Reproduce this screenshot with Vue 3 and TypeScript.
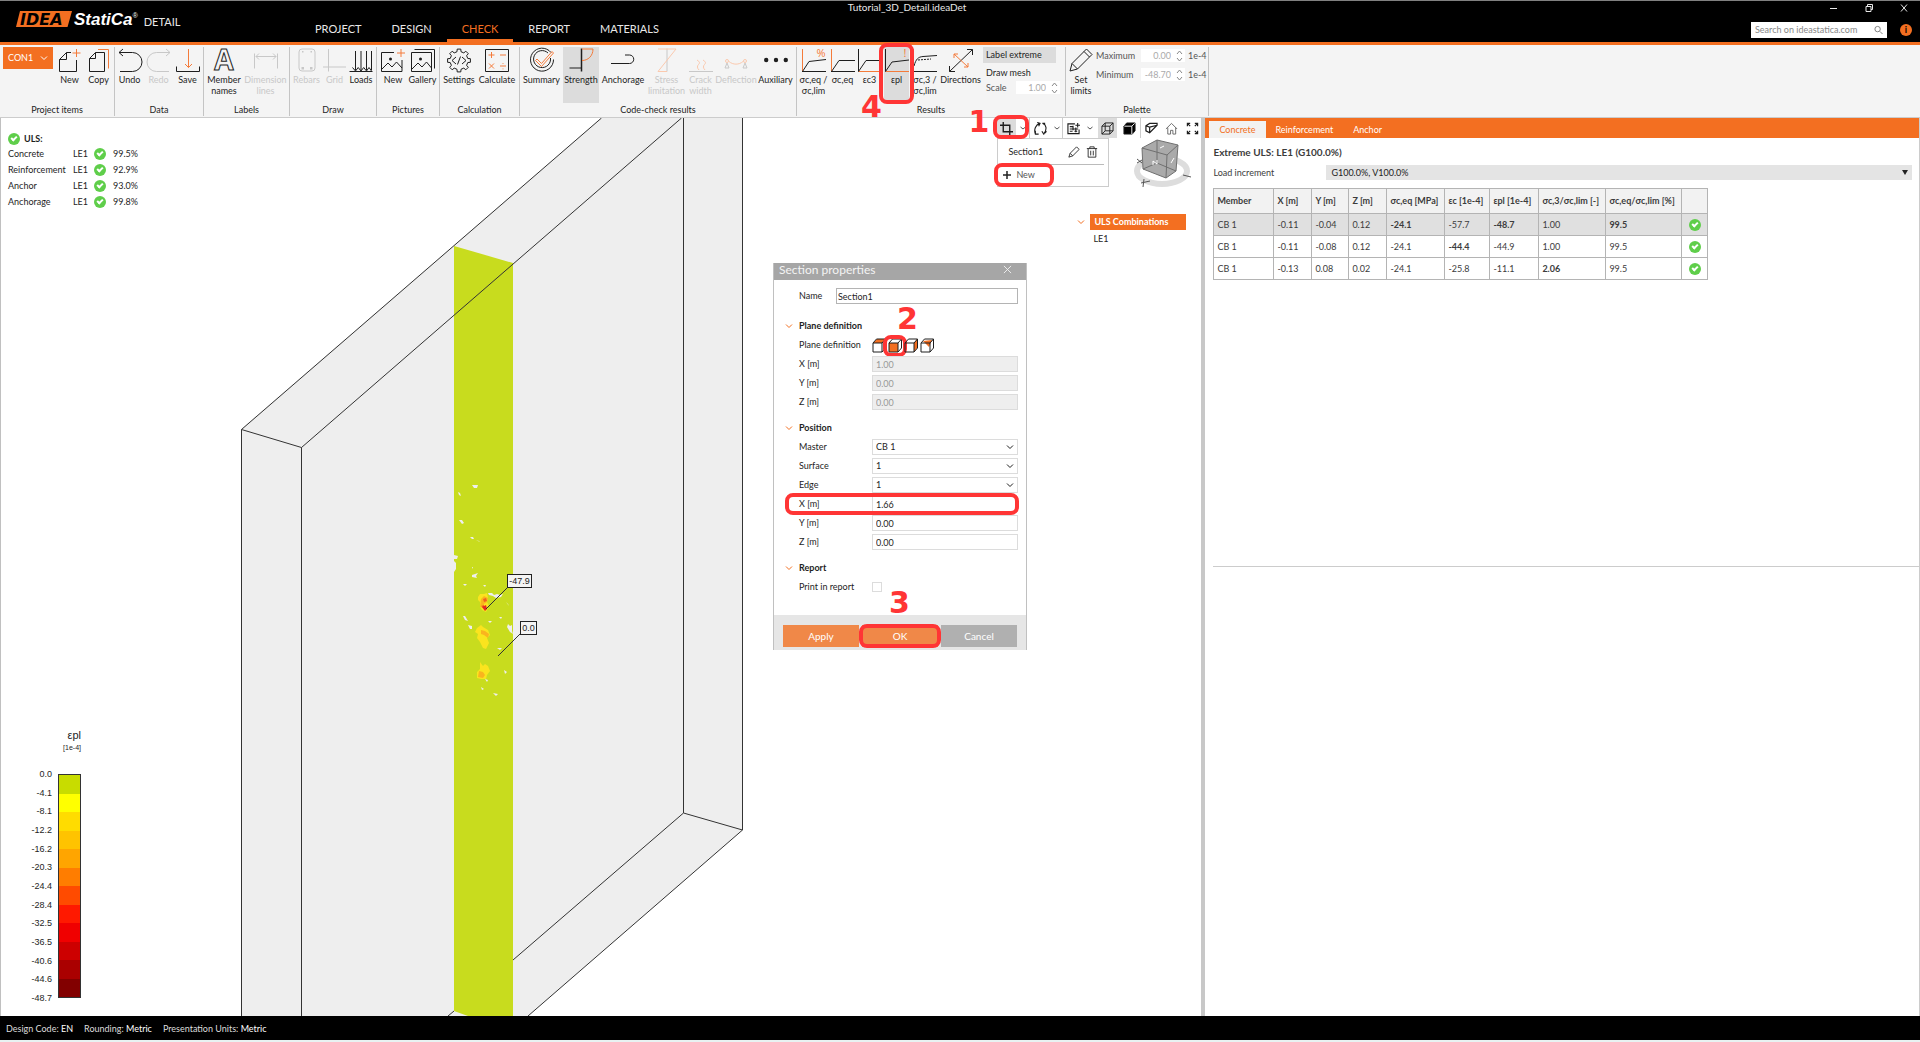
<script setup lang="ts">
import { ref } from 'vue'

interface Stroke {
  d?: string
  c?: string
  f?: boolean
  w?: number
  dash?: string
  text?: string
  x?: number
  y?: number
  size?: number
}
interface Tool {
  icon: string
  lines: string[]
  w: number
  off?: boolean
  on?: boolean
}
interface Group {
  name: string
  w: number
  tools: Tool[]
}

const gear = (() => {
  const pts: string[] = []
  for (let i = 0; i < 8; i++) {
    const at = (r: number, deg: number) => {
      const a = ((i * 45 + deg) * Math.PI) / 180
      return `${(12 + r * Math.cos(a)).toFixed(1)} ${(12.5 + r * Math.sin(a)).toFixed(1)}`
    }
    pts.push(at(9, -13), at(11.5, -9), at(11.5, 9), at(9, 13))
  }
  return `M${pts.join('L')}Z`
})()

const icons: Record<string, Stroke[]> = {
  newDoc: [{ d: 'M13 4.5H8.5L1.5 11.5V23.5H18.5V12M8.5 4.5V11.5H1.5' }, { d: 'M18.5 1v8M14.5 5h8', c: 'o' }],
  copy: [{ d: 'M8.5 4.5H17.5V23.5H2.5V10.5L8.5 4.5V10.5H2.5' }, { d: 'M11 1.5H21.5V20.5', c: 'o' }],
  undo: [{ d: 'M1 4.5H14.5a9.5 9.5 0 0 1 0 19H2M5 1L1 4.5L5 8' }],
  redo: [{ d: 'M23 4.5H9.5a9.5 9.5 0 0 0 0 19H22M19 1l4 3.5-4 3.5' }],
  save: [{ d: 'M12.5 1V19.5M9 16l3.5 3.5L16 16', c: 'o' }, { d: 'M.5 18.5v5H23.5V18.5' }],
  names: [{ text: 'A', x: 12, y: 22, size: 28 }],
  dims: [{ d: 'M.5 5.5v15M23.5 5.5v15M2 8.5h20M5 5.500L2 8.5l3 3M19 5.500l3 3-3 3' }],
  rebars: [
    { d: 'M7 1h10a3 3 0 0 1 3 3v16a3 3 0 0 1-3 3H7a3 3 0 0 1-3-3V4a3 3 0 0 1 3-3z' },
    { d: 'M7 3h1.500v1.500H7zM15.500 3h1.500v1.500h-1.500zM6.500 19h2.500v2.500H6.500zM15 19h2.500v2.500H15z', f: true },
  ],
  grid: [{ d: 'M5.500 1v22.500M0 19h23' }],
  loads: [{ d: 'M6.500 3v19M12 3v19M17.500 3v19M22.500 3v19M.5 23.5H23.5M3.500 19.500l3 3.500 2.700-3.500 2.800 3.500 2.700-3.500 2.800 3.500 2.500-3.500 2.500 3.500' }],
  picNew: [
    { d: 'M13 4.5H.5v19H21V12M1 21l6-6 4 4 4.500-5 5.500 6' },
    { d: 'M8 11a1.500 1.500 0 1 0 3 0a1.500 1.500 0 1 0-3 0', f: true },
    { d: 'M20 1v8M16 5h8', c: 'o' },
  ],
  gallery: [
    { d: 'M.5 4.5h20v19H.5zM1 21l6-6 4 4 4.500-5 5 6M3.500 1.500h20v19' },
    { d: 'M8 11a1.500 1.500 0 1 0 3 0a1.500 1.500 0 1 0-3 0', f: true },
  ],
  gear: [{ d: gear }, { d: 'M9 9l-4 3.500L9 16M15 9l4 3.500-4 3.500M13.500 8.500l-3 8' }],
  calc: [{ d: 'M.5 1.500h23v22H.5z' }, { d: 'M3.500 7h6M6.500 4v6M15 7h6M4 15.500l5 5M9 15.500l-5 5M15 18h6M18 15v.8M18 20.500v.8', c: 'o' }],
  summary: [
    { d: 'M21 4.500a11.500 11.500 0 1 0 2.500 7M18 5a8.500 8.500 0 1 0 2.500 5' },
    { d: 'M7 11l4.500 4.500L22 3.500l1.500 1.500L11.500 18.500 5.500 12.500z', c: 'o' },
  ],
  strength: [{ d: 'M12.500.5v23', w: 1.500 }, { d: 'M.5 20h12' }, { d: 'M13 1H24c0 7-5 11.500-11 11.500', c: 'o' }],
  anchorage: [{ d: 'M0 15.500H18.500a4 4 0 0 0 0-8.500H14' }],
  stress: [{ d: 'M12 .5v23' }, { d: 'M3 1H21L3 23.500H12', c: 'o' }],
  crack: [{ d: 'M0 23.500H24' }, { d: 'M8 12c3 2 3 3 1.500 4.500S8 20 10 22M14 12c3 2 3 3 1.500 4.500S14 20 16 22', c: 'o' }],
  deflect: [
    { d: 'M1 20l2-5 2 5zM19 20l2-5 2 5z' },
    { d: 'M5 13.500c4 3.500 10 3.500 14 0M1.500 13a1.500 1.500 0 1 0 3 0a1.500 1.500 0 1 0-3 0M19.500 13a1.500 1.500 0 1 0 3 0a1.500 1.500 0 1 0-3 0', c: 'o' },
  ],
  dots: [{ d: 'M0 12a2.200 2.200 0 1 0 4.400 0a2.200 2.200 0 1 0-4.400 0M9.800 12a2.200 2.200 0 1 0 4.400 0a2.200 2.200 0 1 0-4.400 0M19.600 12a2.200 2.200 0 1 0 4.400 0a2.200 2.200 0 1 0-4.400 0', f: true }],
  curvePct: [{ d: 'M.5 1v22', c: 'o' }, { d: 'M0 23.500H24M.5 23.500L7 13.500L24 11.500' }, { text: '%', x: 19, y: 9, size: 11, c: 'o' }],
  curveFlat: [{ d: 'M.5 1v22', c: 'o' }, { d: 'M0 23.500H24M.5 23.500L8 12.500H24' }],
  curveC3: [{ d: 'M.5 23.500H24', c: 'o' }, { d: 'M.5 1v22.500L8 12.500H24' }],
  curvePl: [{ d: 'M.5 23.500H24', c: 'o' }, { d: 'M.5 1v22.500L7 14L24 12' }, { text: '!', x: 20, y: 9, size: 11, c: 'o' }],
  curve3: [{ d: 'M.5 1v22', c: 'o' }, { d: 'M0 23.500H24M1 18C3 11 5 9 10 8.500L24 7.500' }, { d: 'M5 12L18 11', dash: '2 1' }],
  directions: [{ d: 'M.5 23.500L23.500 1.500M18 1.500h5.500v5.500M.5 18v5.500H6' }, { d: 'M5 6l14 13M5 10V6h4M15 19h4v-4', c: 'o' }],
  pencil: [{ d: 'M1 23l2-7.500L17.500 1l5.500 5.500L8.500 21zM3 15.500l5.500 5.500M15 3.500l5.500 5.500' }],
}

const groups: Group[] = [
  { name: 'Project items', w: 115, tools: [
    { icon: 'newDoc', lines: ['New'], w: 33 },
    { icon: 'copy', lines: ['Copy'], w: 25 } ] },
  { name: 'Data', w: 89, tools: [
    { icon: 'undo', lines: ['Undo'], w: 29 },
    { icon: 'redo', lines: ['Redo'], w: 29, off: true },
    { icon: 'save', lines: ['Save'], w: 29 } ] },
  { name: 'Labels', w: 86, tools: [
    { icon: 'names', lines: ['Member', 'names'], w: 40 },
    { icon: 'dims', lines: ['Dimension', 'lines'], w: 43, off: true } ] },
  { name: 'Draw', w: 87, tools: [
    { icon: 'rebars', lines: ['Rebars'], w: 33, off: true },
    { icon: 'grid', lines: ['Grid'], w: 23, off: true },
    { icon: 'loads', lines: ['Loads'], w: 30 } ] },
  { name: 'Pictures', w: 63, tools: [
    { icon: 'picNew', lines: ['New'], w: 32 },
    { icon: 'gallery', lines: ['Gallery'], w: 27 } ] },
  { name: 'Calculation', w: 80, tools: [
    { icon: 'gear', lines: ['Settings'], w: 38 },
    { icon: 'calc', lines: ['Calculate'], w: 38 } ] },
  { name: 'Code-check results', w: 277, tools: [
    { icon: 'summary', lines: ['Summary'], w: 43 },
    { icon: 'strength', lines: ['Strength'], w: 36, on: true },
    { icon: 'anchorage', lines: ['Anchorage'], w: 48 },
    { icon: 'stress', lines: ['Stress', 'limitation'], w: 39, off: true },
    { icon: 'crack', lines: ['Crack', 'width'], w: 29, off: true },
    { icon: 'deflect', lines: ['Deflection'], w: 42, off: true },
    { icon: 'dots', lines: ['Auxiliary'], w: 37 } ] },
  { name: 'Results', w: 269, tools: [
    { icon: 'curvePct', lines: ['σc,eq /', 'σc,lim'], w: 33 },
    { icon: 'curveFlat', lines: ['σc,eq'], w: 25 },
    { icon: 'curveC3', lines: ['εc3'], w: 29 },
    { icon: 'curvePl', lines: ['εpl'], w: 25, on: true },
    { icon: 'curve3', lines: ['σc,3 /', 'σc,lim'], w: 32 },
    { icon: 'directions', lines: ['Directions'], w: 39 } ] },
  { name: 'Palette', w: 143, tools: [{ icon: 'pencil', lines: ['Set', 'limits'], w: 30 }] },
]

const tabs = ['PROJECT', 'DESIGN', 'CHECK', 'REPORT', 'MATERIALS']
const activeTab = ref('CHECK')

const checks = [
  ['Concrete', '99.5%'],
  ['Reinforcement', '92.9%'],
  ['Anchor', '93.0%'],
  ['Anchorage', '99.8%'],
]

const scaleValues = ['0.0', '-4.1', '-8.1', '-12.2', '-16.2', '-20.3', '-24.4', '-28.4', '-32.5', '-36.5', '-40.6', '-44.6', '-48.7']
const scaleColors = ['#c8dc00', '#ffff00', '#ffdc00', '#ffc300', '#ffa500', '#ff7d00', '#ff4b00', '#ff1900', '#f00000', '#cd0000', '#aa0000', '#820000']

const columns = ['Member', 'X [m]', 'Y [m]', 'Z [m]', 'σc,eq [MPa]', 'εc [1e-4]', 'εpl [1e-4]', 'σc,3/σc,lim [-]', 'σc,eq/σc,lim [%]', '']
const rows = [
  { cells: ['CB 1', '-0.11', '-0.04', '0.12', '-24.1', '-57.7', '-48.7', '1.00', '99.5'], bold: [4, 6, 8] },
  { cells: ['CB 1', '-0.11', '-0.08', '0.12', '-24.1', '-44.4', '-44.9', '1.00', '99.5'], bold: [5] },
  { cells: ['CB 1', '-0.13', '0.08', '0.02', '-24.1', '-25.8', '-11.1', '2.06', '99.5'], bold: [7] },
]

const planeFields = [['X [m]', '1.00'], ['Y [m]', '0.00'], ['Z [m]', '0.00']]
const pickFields = [['Master', 'CB 1'], ['Surface', '1'], ['Edge', '1']]
const offsetFields = [['X [m]', '1.66'], ['Y [m]', '0.00'], ['Z [m]', '0.00']]
const planeIcons = ['M1 5l4-4h8l-3 4z', 'M1 5h9v9H1z', 'M10 5l3-4v9l-3 4z', 'M3 3L12 2 9 9z']

const voids = 'M472 485h6l-1 3h-3zM458 492l2 1 1 3-2-1zM459 520l3 0 2 3-2 1zM470 537l3 0 1 2-2 0zM476 540l3 1 1 1zM454 555l4 1-1 3-3 0zM454 561l2 2 0 6-2 3zM472 567l1 0 0 2zM472 575l6-2-2 3 1 2-5-1zM463 584l4 0-2 2zM483 585l3 0-1 2zM488 593l4 0 2 2 3-1 3 1 3-1-2 3-5 1-3-2-4-1zM506 602l2 2 1 2zM463 616l2 0 3 5-3-1zM468 625l4 1 0 3-2 0zM480 595l1 1zM488 621l4 0-2 2zM499 617l3 0-1 2zM508 624l2 2 2-1 0 6 1 3-3-2-3-5zM497 648l5 0-2 2zM495 660l3 1zM504 670l3 2-2 2zM485 679l3 1-1 2zM481 687l3 2-2 1zM493 693l5 1-2 2zM470 673l2 2zM471 603l1 1zM510 697l1 1z'
</script>

<template>
  <div class="app">
    <header class="top">
      <div class="brand">
        <svg class="logo" viewBox="0 0 56 16" aria-hidden="true">
          <path d="M4 0H56L51.500 16H0z" class="logo-bg" />
          <text x="4" y="14" class="logo-text" font-size="16">IDEA</text>
        </svg>
        <span class="statica">StatiCa<sup>®</sup></span>
        <span class="product">DETAIL</span>
      </div>
      <nav class="tabs">
        <button v-for="t in tabs" :key="t" :class="{ active: t === activeTab }" @click="activeTab = t">{{ t }}</button>
      </nav>
      <div class="doc-title">Tutorial_3D_Detail.ideaDet</div>
      <div class="top-right">
        <div class="win">
          <button aria-label="Minimize"><svg viewBox="0 0 10 10"><path d="M1 5.500h7" /></svg></button>
          <button aria-label="Restore"><svg viewBox="0 0 10 10"><path d="M2 3.500h5v5H2zM3.500 3.500v-2h5v5H7" /></svg></button>
          <button aria-label="Close"><svg viewBox="0 0 10 10"><path d="M2 1.500l6 7M8 1.500l-6 7" /></svg></button>
        </div>
        <div class="search-row">
          <label class="search">
            <input type="text" placeholder="Search on ideastatica.com" aria-label="Search" />
            <svg viewBox="0 0 10 10"><path d="M1 4a3 3 0 1 0 6 0a3 3 0 1 0-6 0M6.500 6.500L9.500 9.500" /></svg>
          </label>
          <button class="info" aria-label="Info">i</button>
        </div>
      </div>
    </header>

    <section class="ribbon">
      <div v-for="g in groups" :key="g.name" class="group" :style="{ width: g.w + 'px' }">
        <div class="items">
          <button v-if="g.name === 'Project items'" class="con">CON1
            <svg viewBox="0 0 8 6"><path d="M1 1.500l3 3 3-3" /></svg>
          </button>
          <button v-for="t in g.tools" :key="t.icon" class="tool" :class="{ off: t.off, on: t.on }" :disabled="t.off" :style="{ width: t.w + 'px' }">
            <svg class="ico" viewBox="0 0 24 24">
              <template v-for="(s, i) in icons[t.icon]" :key="i">
                <text v-if="s.text" :x="s.x" :y="s.y" :font-size="s.size" :class="['glyph', s.c]">{{ s.text }}</text>
                <path v-else :d="s.d" :class="[s.c, { fill: s.f }]" :stroke-width="s.w" :stroke-dasharray="s.dash" />
              </template>
            </svg>
            <span v-for="l in t.lines" :key="l">{{ l }}</span>
            <span v-if="t.icon === 'curvePl'" class="mark mark-4"><b>4</b></span>
          </button>
          <div v-if="g.name === 'Results'" class="side results-side">
            <button class="flat on">Label extreme</button>
            <button class="flat">Draw mesh</button>
            <div class="num">
              <label for="scale">Scale</label>
              <span class="spin"><input id="scale" value="1.00" disabled /><svg viewBox="0 0 7 12"><path d="M1 4l2.500-3L6 4M1 8l2.500 3L6 8" /></svg></span>
            </div>
          </div>
          <div v-if="g.name === 'Palette'" class="side palette-side">
            <div class="num">
              <label for="pmax">Maximum</label>
              <span class="spin"><input id="pmax" value="0.00" disabled /><svg viewBox="0 0 7 12"><path d="M1 4l2.500-3L6 4M1 8l2.500 3L6 8" /></svg></span>
              <span>1e-4</span>
            </div>
            <div class="num">
              <label for="pmin">Minimum</label>
              <span class="spin"><input id="pmin" value="-48.70" disabled /><svg viewBox="0 0 7 12"><path d="M1 4l2.500-3L6 4M1 8l2.500 3L6 8" /></svg></span>
              <span>1e-4</span>
            </div>
          </div>
        </div>
        <div class="group-name">{{ g.name }}</div>
      </div>
    </section>

    <main class="work">
      <section class="view">
        <svg class="model" viewBox="1 118 1201 898" preserveAspectRatio="xMinYMin slice">
          <path class="face" d="M241 429L601 118H742.500V830L528 1016H241z" />
          <path class="edge" d="M601.500 118L241.500 429.500V1016M241.500 429.500L301.500 447.500V1016M683.500 118V813L742.500 830L528 1016M742.500 118V830M683.500 813L513 960M454 1011L448 1016" />
          <path class="cut" d="M454 246L513 263V1016H468L454 1011z" />
          <path class="edge" d="M301.500 447.500L681.500 118" />
          <path class="face" :d="voids" />
          <g class="spots">
            <path fill="#fae41e" d="M478 597l2-3 4 0 3-1 1 5-1 4 2 4-3 6-4-2-2-3 0-5-2-2zM477 628l4-3 2 2 5 3 2 5-3 3 2 5-3 6-3-1-3-6-3-4 1-4-3-2zM477 672l3-3 0-7 3 4 2-2 3 2 2 5-3 4-1 4-5 0-4-1z" />
            <path fill="#fab41e" d="M481 599l3-3 4 2-1 4-3 2 0 4-4-1zM481 630l4 1 4 3-1 4-4-3-3-1zM479 671l4 1 2 3-2 3-5-1z" />
            <path fill="#f0641e" d="M483 599l3-1 1 3-3 1zM481 606l3-1 0 3z" />
            <path fill="#e6281e" d="M482 607l4-2 1 4-2 2z" />
          </g>
          <path class="edge" d="M508 587L486 609M520 634L498 656" />
          <g class="callout">
            <rect x="507.500" y="574.500" width="24" height="13" /><text x="519.500" y="584" font-size="9">-47.9</text>
            <rect x="520.500" y="621.500" width="16" height="13" /><text x="528.500" y="631" font-size="9">0.0</text>
          </g>
        </svg>

        <div class="checks">
          <h2><i class="ok"></i>ULS:</h2>
          <table>
            <tbody>
              <tr v-for="c in checks" :key="c[0]">
                <th scope="row">{{ c[0] }}</th><td>LE1</td><td><i class="ok"></i></td><td>{{ c[1] }}</td>
              </tr>
            </tbody>
          </table>
        </div>

        <div class="legend">
          <div class="legend-title">εpl</div>
          <div class="legend-unit">[1e-4]</div>
          <div class="legend-body">
            <div class="legend-values"><span v-for="v in scaleValues" :key="v">{{ v }}</span></div>
            <div class="legend-bar"><i v-for="c in scaleColors" :key="c" :style="{ background: c }"></i></div>
          </div>
        </div>

        <div class="view-tools">
          <div class="bar">
            <button class="pressed" aria-label="Section"><svg viewBox="0 0 14 14"><path d="M3.500 0v10.500H14M0 3.500h10.500V14" stroke-width="1.500" /></svg></button>
            <button class="drop" aria-label="Section list"><svg viewBox="0 0 8 6"><path d="M1.500 2l2.500 2 2.500-2" /></svg></button>
            <button class="wide sep" aria-label="Rotate"><svg viewBox="0 0 14 14"><path d="M5 13H1.500V9.500M1.500 13C-.5 8 2 3 6 1.500M3.500 .5L6.500 1.500 5 4.500M9.500 1.500C13.500 3 14 8 11 12M13.500 10L10.500 13 8.500 10M9 1.500h3" stroke-width="1.200" /></svg></button>
            <button class="drop narrow" aria-label="Rotate options"><svg viewBox="0 0 8 6"><path d="M1.500 2l2.500 2 2.500-2" /></svg></button>
            <button class="wide sep" aria-label="Labels"><svg viewBox="0 0 14 14"><path d="M8.500 2H1v10.500h12V8M3 5h4M3 7.500h9M3 10h3M8 10h3M6.500 4v5M9.500 6v5M9 3.500h5M11.500 1v5" stroke-width="1.200" /></svg></button>
            <button class="drop narrow" aria-label="Label options"><svg viewBox="0 0 8 6"><path d="M1.500 2l2.500 2 2.500-2" /></svg></button>
            <button class="pressed wire" aria-label="Wireframe"><svg viewBox="0 0 14 14"><path d="M1 4.500h8.500v8.500H1zM1 4.500L4.500 1H13v8.500L9.500 13M9.500 4.500L13 1M4.500 1v8.500H13M4.500 9.500L1 13" /></svg></button>
            <button class="wide" aria-label="Solid"><svg viewBox="0 0 14 14"><path class="solid" d="M1 4.500L4 1H13v8.500L10 13H1z" /><path d="M1.500 4.500H9.500V13M9.500 4.500L12.500 1.500" class="light" /></svg></button>
            <button class="wide sep" aria-label="Clip"><svg viewBox="0 0 14 14"><path d="M1 4l4-2.500h8v2L5 11.500 1 9.500zM1 4l4 1.500V11M5 5.500L13 3.500" stroke-width="1.300" /></svg></button>
            <button class="faint" aria-label="Home"><svg viewBox="0 0 14 14"><path d="M1 7.500L7 1.500l6 6M3 6v7h3V9h2.500v4H11.500V6" /></svg></button>
            <button class="wide" aria-label="Fit"><svg viewBox="0 0 14 14"><path d="M1.500 4.500V1.500H4.500M1.500 1.500L4.500 4.500M9.500 1.500h3V4.500M12.500 1.500L9.500 4.500M1.500 9.500v3H4.500M1.500 12.500L4.500 9.500M9.500 12.500h3V9.500M12.500 12.500L9.500 9.500" stroke-width="1.300" /></svg></button>
            <span class="mark mark-1"><b>1</b></span>
          </div>
          <div class="under">
            <div class="menu">
              <div class="menu-row">
                <span>Section1</span>
                <button aria-label="Edit"><svg viewBox="0 0 14 14"><path d="M1 13l1.500-4.500L10 1l3 3-7.500 7.500zM2.500 8.500l3 3" /></svg></button>
                <button aria-label="Delete"><svg viewBox="0 0 14 14"><path d="M1 3h12M4.500 3V1h5v2M2.500 3v10h9V3M5.500 5.500v5.500M8.500 5.500v5.500" /></svg></button>
              </div>
              <button class="menu-new"><svg viewBox="0 0 8 8"><path d="M4 0v8M0 4h8" stroke-width="1.500" /></svg>New<span class="mark mark-new"></span></button>
            </div>
            <svg class="cube" viewBox="0 0 62 54">
              <ellipse cx="31" cy="32" rx="25" ry="13" class="ring" />
              <path class="cube-face" d="M11 9L26 1L47 6L45 32L35 39L12 30z" />
              <path class="cube-edge" d="M11 9L26 1L47 6L45 32L35 39L12 30zM11 9L36 16L47 6M36 16L35 39M26 1L26 24L45 32M26 24L12 30" />
              <path class="cube-tick" d="M6 20l5 4M6 24l5-3M10 44l9-2M13 40l-1 8M52 36l8 2" />
              <path class="light" d="M29 9l4-2M22 26v-4l4 3v-4M40 24l3-5" />
            </svg>
          </div>
          <div class="combos">
            <div class="combo-head"><svg viewBox="0 0 8 6"><path d="M1 1.500l3 3 3-3" /></svg><strong>ULS Combinations</strong></div>
            <div class="combo-item">LE1</div>
          </div>
        </div>
      </section>

      <div class="splitter"></div>

      <aside class="panel">
        <nav class="panel-tabs">
          <button class="active">Concrete</button><button>Reinforcement</button><button>Anchor</button>
        </nav>
        <div class="results">
          <h2>Extreme ULS: LE1 (G100.0%)</h2>
          <div class="increment">
            <label for="inc">Load increment</label>
            <div class="select-wrap">
              <select id="inc"><option>G100.0%, V100.0%</option></select>
              <svg viewBox="0 0 6 5"><path d="M0 0h6L3 5z" /></svg>
            </div>
          </div>
          <table class="data">
            <colgroup><col v-for="(c, i) in columns" :key="i" :class="'c' + i" /></colgroup>
            <thead><tr><th v-for="c in columns" :key="c" scope="col">{{ c }}</th></tr></thead>
            <tbody>
              <tr v-for="(r, ri) in rows" :key="ri" :class="{ picked: ri === 0 }">
                <td v-for="(v, i) in r.cells" :key="i" :class="{ strong: r.bold.includes(i) }">{{ v }}</td>
                <td class="center"><i class="ok"></i></td>
              </tr>
            </tbody>
          </table>
        </div>
        <div class="lower"></div>
      </aside>

      <form class="dialog" @submit.prevent>
        <div class="dialog-title">Section properties
          <button type="button" aria-label="Close"><svg viewBox="0 0 10 10"><path d="M1 1l8 8M9 1l-8 8" /></svg></button>
        </div>
        <div class="dialog-body">
          <div class="row name-row"><label for="nm">Name</label><input id="nm" value="Section1" /></div>
          <h3><svg viewBox="0 0 8 6"><path d="M1 1.500l3 3 3-3" /></svg>Plane definition<b class="num-2">2</b></h3>
          <div class="row">
            <span class="lbl">Plane definition</span>
            <div class="planes">
              <button v-for="(p, i) in planeIcons" :key="i" type="button" :aria-label="'Plane ' + (i + 1)">
                <svg viewBox="0 0 15 15"><path class="pf" :d="p" /><path d="M1 5h9v9H1zM1 5l3.500-4H13.500v9L10 14M10 5l3.500-4" /></svg>
                <span v-if="i === 1" class="mark mark-2"></span>
              </button>
            </div>
          </div>
          <div v-for="(f, i) in planeFields" :key="'p' + i" class="row">
            <label :for="'p' + i">{{ f[0] }}</label><input :id="'p' + i" :value="f[1]" disabled />
          </div>
          <h3><svg viewBox="0 0 8 6"><path d="M1 1.500l3 3 3-3" /></svg>Position</h3>
          <div v-for="(f, i) in pickFields" :key="'s' + i" class="row">
            <label :for="'s' + i">{{ f[0] }}</label>
            <div class="select-wrap">
              <select :id="'s' + i"><option>{{ f[1] }}</option></select>
              <svg viewBox="0 0 8 6"><path d="M1 1.500l3 3 3-3" /></svg>
            </div>
          </div>
          <div v-for="(f, i) in offsetFields" :key="'o' + i" class="row">
            <label :for="'o' + i">{{ f[0] }}</label><input :id="'o' + i" :value="f[1]" />
            <span v-if="i === 0" class="mark mark-x"></span>
          </div>
          <h3><svg viewBox="0 0 8 6"><path d="M1 1.500l3 3 3-3" /></svg>Report</h3>
          <div class="row"><label for="rep">Print in report</label><input id="rep" type="checkbox" /></div>
        </div>
        <div class="dialog-foot">
          <button type="button">Apply</button>
          <button type="submit">OK<span class="mark mark-3"><b>3</b></span></button>
          <button type="button" class="cancel">Cancel</button>
        </div>
      </form>
    </main>

    <footer class="status">
      <span>Design Code: <b>EN</b></span><span>Rounding: <b>Metric</b></span><span>Presentation Units: <b>Metric</b></span>
    </footer>
  </div>
</template>

<style>
body {
  margin: 0;
  background: #e8f2f2;
}
</style>

<style scoped>
.app {
  --orange: #f36f21;
  --red: #ff3535;
  display: flex;
  flex-direction: column;
  min-height: 100vh;
  box-sizing: border-box;
  padding-bottom: 2px;
  font: 9px/12px Lato, 'Open Sans', sans-serif;
  color: #1e1e1e;
}
.app *, .app *::before, .app *::after { box-sizing: border-box; }
button, input, select {
  margin: 0;
  padding: 0;
  border: 0;
  background: none;
  font: inherit;
  color: inherit;
  outline: 0;
}
svg { display: block; flex: none; fill: none; stroke: currentColor; }
h2, h3 { margin: 0; font-size: inherit; }
h2, h3, strong { font-weight: 700; }

/* header */
.top {
  display: flex;
  height: 45px;
  background: #000;
  border-top: 1px solid #808080;
  border-bottom: 3px solid var(--orange);
  color: #e8e8e8;
}
.brand { display: flex; width: 300px; padding: 10px 0 0 16px; align-items: flex-start; }
.logo { width: 56px; height: 16px; overflow: visible; }
.logo-bg { fill: var(--orange); stroke: none; }
.logo-text { font-family: 'DejaVu Sans', sans-serif; font-style: italic; font-weight: 700; fill: #000; stroke: none; }
.statica { margin-left: 2px; font: italic 700 17px/18px 'Liberation Sans', sans-serif; color: #fff; }
.statica sup { font-size: 7px; font-weight: 400; line-height: 8px; vertical-align: 7px; }
.product { margin-left: 6px; font-size: 11px; line-height: 22px; }
.tabs { display: flex; }
.tabs button { padding: 18px 15px 0; font-size: 11px; line-height: 20px; border-bottom: 3px solid transparent; }
.tabs .active { color: var(--orange); border-color: var(--orange); }
.doc-title { margin-left: 174px; font-size: 10px; line-height: 12px; }
.top-right { margin-left: auto; padding-right: 8px; }
.win { display: flex; justify-content: flex-end; gap: 25px; height: 21px; padding-right: 3px; }
.win button { height: 12px; }
.win svg { width: 10px; height: 10px; margin-top: 1px; }
.search-row { display: flex; gap: 13px; align-items: center; }
.search { display: flex; width: 136px; height: 16px; padding: 0 4px; background: #fff; align-items: center; color: #777; }
.search input { flex: 1; min-width: 0; font-size: 9px; }
.search input::placeholder { color: #888; opacity: 1; }
.search svg { width: 9px; height: 10px; }
.info { width: 12px; height: 12px; border-radius: 50%; background: var(--orange); color: #000; font-size: 9px; line-height: 12px; font-weight: 700; }

/* ribbon */
.ribbon { display: flex; height: 73px; padding: 2px 0 1px; background: #f4f4f4; border-bottom: 1px solid #ccc; }
.group { display: flex; flex-direction: column; border-right: 1px solid #c4c4c4; }
.items { display: flex; height: 56px; }
.group-name { text-align: center; line-height: 14px; }
.con {
  display: flex;
  align-items: center;
  justify-content: space-between;
  width: 50px;
  height: 22px;
  margin-left: 3px;
  padding: 0 5px;
  background: var(--orange);
  color: #fff;
}
.con svg { width: 8px; height: 6px; }
.tool {
  position: relative;
  display: flex;
  flex-direction: column;
  align-items: center;
  flex: none;
  height: 56px;
  padding-top: 1px;
  line-height: 11px;
  white-space: nowrap;
}
.tool.on { background: #dcdcdc; }
.tool.off { color: #c8c8c8; }
.ico { width: 24px; height: 24px; margin-bottom: 2px; overflow: visible; }
.ico .o { stroke: #f47b3a; }
.off .ico .o { stroke: #fbc9ae; }
.ico .fill { fill: currentColor; stroke: none; }
.glyph { font-family: 'Open Sans', sans-serif; text-anchor: middle; font-weight: 700; }
.ico .glyph.o { fill: #f47b3a; stroke: none; font-weight: 400; }
.side { display: flex; flex-direction: column; }
.results-side { padding-left: 3px; }
.flat { width: 73px; height: 16px; padding: 0 3px; text-align: left; }
.flat:nth-child(2) { margin: 2px 0 0; }
.flat.on { background: #dcdcdc; }
.num { display: flex; align-items: center; color: #555; }
.num label { width: 33px; padding-left: 3px; }
.spin { display: flex; width: 44px; height: 13px; padding: 0 2px; background: #fff; align-items: center; color: #888; }
.spin input { flex: 1; width: 20px; margin-right: 5px; text-align: right; color: #aaa; }
.spin svg { width: 7px; height: 12px; }
.palette-side { gap: 6px; padding-top: 2px; }
.palette-side label { width: 45px; padding: 0; }
.palette-side .spin + span { margin-left: 3px; }

/* red walkthrough marks */
.mark { position: absolute; border: 4px solid var(--red); border-radius: 8px; pointer-events: none; }
.mark b, .num-2 { position: absolute; font: 700 30px/30px 'DejaVu Sans', sans-serif; color: var(--red); }
.mark-4 { z-index: 2; inset: -4px -5px -1px -5px; }
.mark-4 b { left: -22px; top: 45px; }
.mark-1 { left: -4px; top: -3px; width: 36px; height: 24px; }
.mark-1 b { left: -29px; top: -12px; }
.mark-new { left: -5px; top: -2px; width: 60px; height: 24px; }
.mark-2 { left: -5px; top: -3px; width: 24px; height: 22px; }
.mark-x { left: -14px; right: -1px; top: -3px; height: 22px; }
.mark-3 { inset: -1px -3px; }
.mark-3 b { left: 26px; top: -40px; }
.num-2 { left: 112px; top: -14px; }

/* workspace */
.work { position: relative; display: flex; flex: 1; background: #fff; border-left: 1px solid #c0c0c0; }
.view { position: relative; flex: 1201 1 0; min-width: 0; }
.splitter { width: 4px; background: #c8c8c8; }
.panel { display: flex; flex-direction: column; flex: 714 1 0; min-width: 0; border-right: 1px solid #ccc; color: #3c3c3c; }
.model { position: absolute; inset: 0; width: 100%; height: 100%; }
.face { fill: #eee; stroke: none; }
.spots { stroke: none; }
.edge { stroke: #333; }
.cut { fill: #c8dc1e; stroke: none; }
.callout rect { fill: #f4f4f4; stroke: #222; }
.callout text { font-family: 'Liberation Sans', sans-serif; text-anchor: middle; fill: #222; stroke: none; }
.ok { position: relative; display: inline-block; width: 12px; height: 12px; border-radius: 50%; background: #5fce4a; vertical-align: middle; }
.ok::after { content: ''; position: absolute; left: 3px; top: 3px; width: 6px; height: 4px; border: solid #fff; border-width: 0 0 2px 2px; transform: rotate(-45deg); }

.checks { position: absolute; left: 7px; top: 14px; }
.checks h2 { display: flex; align-items: center; gap: 4px; height: 14px; font-size: 9px; }
.checks table { border-spacing: 0; }
.checks th, .checks td { height: 16px; padding: 0; font-weight: 400; text-align: left; line-height: 12px; }
.checks th { width: 65px; }
.checks td:nth-child(2) { width: 21px; }
.checks td:nth-child(3) { width: 19px; }

.legend { position: absolute; left: 19px; bottom: 12px; width: 61px; text-align: right; font-family: 'Liberation Sans', sans-serif; }
.legend-title { font-size: 11px; line-height: 14px; }
.legend-unit { font-size: 7px; line-height: 12px; }
.legend-body { display: flex; justify-content: flex-end; margin-top: 14px; gap: 6px; }
.legend-values { display: flex; flex-direction: column; justify-content: space-between; height: 236px; font-size: 9px; }
.legend-values span { line-height: 12px; }
.legend-bar { display: flex; flex-direction: column; width: 23px; height: 224px; margin-top: 6px; border: 1px solid #333; }
.legend-bar i { flex: 1; }

.view-tools { position: absolute; top: 0; right: 0; width: 204px; }
.bar { position: relative; display: flex; height: 20px; }
.bar button { display: flex; flex: none; width: 19px; height: 20px; align-items: center; justify-content: center; }
.bar button svg { width: 13px; height: 13px; }
.bar .drop { width: 13px; color: #555; }
.bar .drop.narrow { width: 11px; }
.bar .wide { width: 22px; }
.bar .wire { margin: 0 1px 0 3px; }
.bar .drop svg { width: 8px; height: 6px; }
.bar .sep { border-left: 1px solid #ccc; }
.bar .pressed { background: #dcdcdc; }
.bar .faint { color: #666; }
.solid { fill: #000; }
.light { stroke: #fff; }
.under { display: flex; height: 76px; }
.menu { width: 112px; height: 49px; background: #fff; border: 1px solid #ccc; }
.menu-row { display: flex; align-items: center; height: 26px; margin: 0 4px; padding-left: 6px; border-bottom: 1px solid #bbb; }
.menu-row span { width: 61px; }
.menu-row button { width: 19px; }
.menu-row svg { width: 12px; height: 12px; }
.menu-new { position: relative; display: flex; align-items: center; gap: 5px; height: 20px; margin-left: 1px; padding: 0 4px; color: #555; }
.menu-new svg { width: 8px; height: 8px; color: #222; }
.cube { width: 62px; height: 54px; margin: 1px 0 0 22px; }
.ring { stroke: #ddd; stroke-width: 6; }
.cube-face { fill: #aaa; stroke: none; }
.cube-edge { stroke: #707070; }
.cube-tick { stroke: #555; }
.combos { margin-left: 80px; }
.combo-head { display: flex; align-items: center; }
.combo-head svg { width: 8px; height: 6px; margin-right: 5px; color: var(--orange); }
.combo-head strong { width: 96px; padding: 0 4px; background: var(--orange); color: #fff; line-height: 16px; white-space: nowrap; }
.combo-item { padding-left: 16px; line-height: 17px; }

/* result panel */
.panel-tabs { display: flex; height: 20px; padding: 3px 0 0 4px; background: var(--orange); }
.panel-tabs button { padding: 0 10px; color: #fff; }
.panel-tabs .active { background: #f2f2f2; color: var(--orange); }
.results { height: 429px; margin-left: 8px; padding: 8px 7px 0 0; border-bottom: 1px solid #ccc; }
.results h2 { font-size: 10px; line-height: 12px; }
.increment { display: flex; align-items: center; margin-top: 7px; }
.increment label { width: 113px; }
.select-wrap { position: relative; display: flex; flex: 1; }
.select-wrap select { flex: 1; appearance: none; }
.select-wrap svg { position: absolute; right: 4px; top: 5px; width: 8px; height: 6px; pointer-events: none; }
.increment select { height: 15px; padding: 0 5px; background: #e4e4e4; color: #222; }
.increment svg { width: 6px; height: 5px; fill: #222; stroke: none; }
.data { width: 494px; margin-top: 8px; table-layout: fixed; border-collapse: collapse; border: 1px solid #b4b4b4; }
.data th, .data td { height: 22px; padding: 0 3px; border: 1px solid #b4b4b4; text-align: left; white-space: nowrap; }
.data th { height: 25px; background: #f2f2f2; font-size: 9px; }
.picked { background: #e0e0e0; }
.strong { font-weight: 700; }
.data .center { text-align: center; padding: 0; }
.c0 { width: 60px; }
.c1, .c3 { width: 38px; }
.c2 { width: 37px; }
.c4 { width: 58px; }
.c5 { width: 45px; }
.c6 { width: 49px; }
.c7 { width: 67px; }
.c8 { width: 76px; }
.c9 { width: 26px; }

/* dialog window */
.dialog { position: absolute; left: 772px; top: 145px; width: 254px; background: #fff; border: solid #c0c0c0; border-width: 0 1px; }
.dialog-title { display: flex; justify-content: space-between; height: 17px; padding: 0 14px 4px 5px; background: #a6a6a6; color: #f4f4f4; font-size: 12px; line-height: 13px; }
.dialog-title svg { width: 9px; height: 9px; }
.dialog-body { height: 335px; padding: 8px 8px 0 25px; }
.row { position: relative; display: flex; align-items: center; height: 16px; margin-bottom: 3px; }
.row label, .lbl { width: 73px; }
.row input, .row select { flex: 1; min-width: 0; height: 16px; padding: 0 3px; border: 1px solid #dcdcdc; }
.row input:disabled { background: #eee; color: #999; }
.row input[type='checkbox'] { appearance: none; flex: none; width: 10px; height: 10px; }
.row.name-row label { width: 37px; }
.row.name-row input { border-color: #b4b4b4; padding: 0 1px; }
.dialog h3 { position: relative; display: flex; align-items: center; height: 16px; margin: 10px 0 3px -14px; }
.dialog h3 svg { width: 8px; height: 6px; margin-right: 6px; color: var(--orange); }
.dialog .name-row + h3 { margin-top: 14px; }
.planes { display: flex; gap: 1px; }
.planes button { position: relative; }
.planes svg { width: 15px; height: 15px; }
.pf { fill: var(--orange); stroke: none; }
.dialog-foot { display: flex; gap: 3px; height: 35px; padding: 10px 9px 3px; background: #e6e6e6; }
.dialog-foot button { position: relative; flex: 1; background: #f08848; color: #fff; font-size: 10px; }
.dialog-foot .cancel { background: #b0b0b0; }

.status { display: flex; gap: 11px; height: 24px; padding-left: 6px; background: #000; color: #ddd; line-height: 25px; }
.status b { color: #fff; font-weight: 400; }
</style>
